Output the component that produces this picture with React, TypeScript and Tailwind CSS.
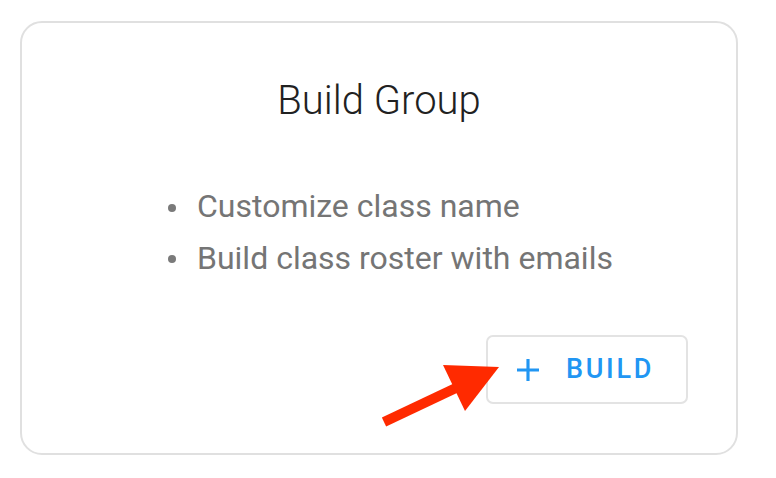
import React from "react";

export default function App() {
  return (
    <div
      className="relative w-[776px] h-[478px] bg-white pt-[21px] pl-[20px]"
      style={{ fontFamily: "Roboto, 'Liberation Sans', sans-serif" }}
    >
      <div className="w-[718px] h-[434px] border-2 border-[#e0e0e0] rounded-[22px] pt-[58px] flex flex-col">
        <h2 className="text-center text-[40px] leading-[40px] font-light text-[#212121]">
          Build Group
        </h2>
        <ul className="mt-[60px] ml-[146px] self-start">
          {["Customize class name", "Build class roster with emails"].map((t) => (
            <li key={t} className="flex items-center text-[32px] leading-[51.5px] text-[#757575]">
              <span className="mt-[2px] mr-[21px] w-[8px] h-[8px] rounded-full bg-[#7a7a7a] shrink-0" />
              {t}
            </li>
          ))}
        </ul>
        <div className="flex justify-end pr-[48px] mt-[51px]">
          <button className="w-[202px] h-[69px] border-2 border-[#e3e3e3] rounded-[7px] flex items-center pl-[29px] text-[#2196f3]">
            <svg width="22" height="22" viewBox="5 5 14 14" className="mr-[27px] shrink-0" fill="currentColor">
              <path d="M19 13h-6v6h-2v-6H5v-2h6V5h2v6h6v2z" />
            </svg>
            <span className="text-[27px] font-medium tracking-[2.7px] leading-none">BUILD</span>
          </button>
        </div>
      </div>
      <svg
        className="absolute left-0 top-0 pointer-events-none"
        width="776"
        height="478"
        viewBox="0 0 776 478"
      >
        <line x1="384" y1="422" x2="458" y2="387" stroke="#ff2a00" strokeWidth="10" />
        <polygon points="443,365 499,367 465,411" fill="#ff2a00" />
      </svg>
    </div>
  );
}
